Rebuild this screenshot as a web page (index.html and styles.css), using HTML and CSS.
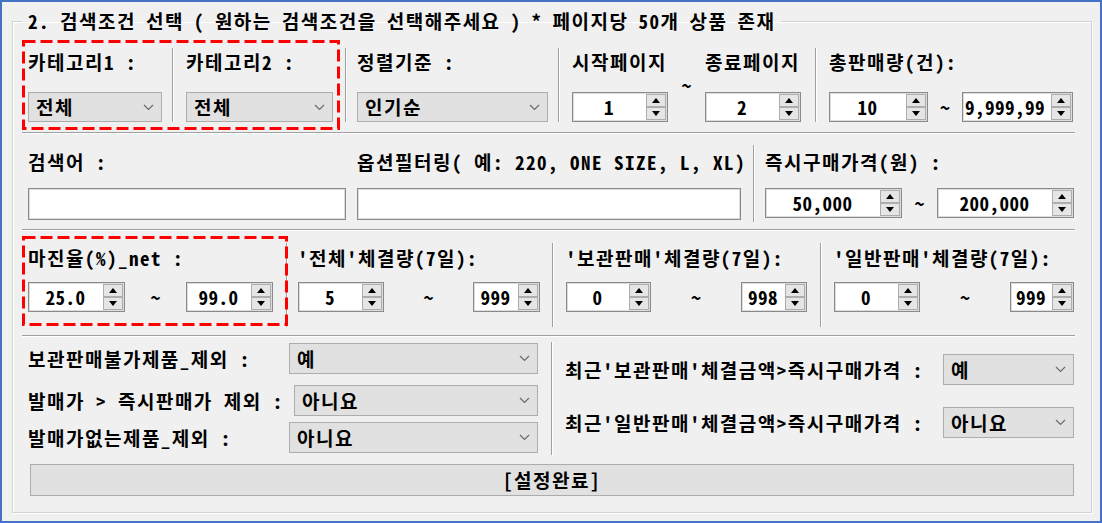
FILE: index.html
```html
<!DOCTYPE html>
<html>
<head>
    <title>검색조건 선택</title>
    <meta http-equiv="content-type" content="text/html; charset=UTF-8"/>
    <link rel="stylesheet" href="styles.css">
</head>
<body>
    <div class="window">
        <fieldset class="group">
            <legend>2. 검색조건 선택 ( 원하는 검색조건을 선택해주세요 ) * 페이지당 50개 상품 존재</legend>

            <!-- 1행 : 카테고리 / 정렬 / 페이지 / 총판매량 -->
            <div class="row r1">
                <div class="cell cat1">
                    <div class="lbl">카테고리1 :</div>
                    <div class="combo ctl"><span>전체</span><svg width="11" height="7" viewBox="0 0 11 7"><polyline points="1,1 5.5,5.5 10,1"/></svg></div>
                </div>
                <div class="cell dv cat2">
                    <div class="lbl">카테고리2 :</div>
                    <div class="combo ctl"><span>전체</span><svg width="11" height="7" viewBox="0 0 11 7"><polyline points="1,1 5.5,5.5 10,1"/></svg></div>
                </div>
                <div class="cell dv sort">
                    <div class="lbl">정렬기준 :</div>
                    <div class="combo ctl"><span>인기순</span><svg width="11" height="7" viewBox="0 0 11 7"><polyline points="1,1 5.5,5.5 10,1"/></svg></div>
                </div>
                <div class="cell dv pages">
                    <div class="sub">
                        <div class="lbl">시작페이지</div>
                        <div class="spin ctl w96"><span class="val">1</span><span class="arrows"><i class="up"></i><i class="dn"></i></span></div>
                    </div>
                    <div class="tl tl_up">~</div>
                    <div class="sub">
                        <div class="lbl">종료페이지</div>
                        <div class="spin ctl w96"><span class="val">2</span><span class="arrows"><i class="up"></i><i class="dn"></i></span></div>
                    </div>
                </div>
                <div class="cell dv total">
                    <div class="lbl">총판매량(건):</div>
                    <div class="range ctl">
                        <div class="spin w99"><span class="val">10</span><span class="arrows"><i class="up"></i><i class="dn"></i></span></div>
                        <span class="tl">~</span>
                        <div class="spin w111"><span class="val left">9,999,99</span><span class="arrows"><i class="up"></i><i class="dn"></i></span></div>
                    </div>
                </div>
            </div>

            <!-- 2행 : 검색어 / 옵션필터링 / 즉시구매가격 -->
            <div class="row r2">
                <div class="cell kw">
                    <div class="lbl">검색어 :</div>
                    <div class="tb ctl"></div>
                </div>
                <div class="cell opt">
                    <div class="lbl">옵션필터링( 예: 220, ONE SIZE, L, XL)</div>
                    <div class="tb ctl"></div>
                </div>
                <div class="cell dv price">
                    <div class="lbl">즉시구매가격(원) :</div>
                    <div class="range ctl">
                        <div class="spin w137"><span class="val">50,000</span><span class="arrows"><i class="up"></i><i class="dn"></i></span></div>
                        <span class="tl">~</span>
                        <div class="spin w137"><span class="val">200,000</span><span class="arrows"><i class="up"></i><i class="dn"></i></span></div>
                    </div>
                </div>
            </div>

            <!-- 3행 : 마진율 / 체결량 -->
            <div class="row r3">
                <div class="cell margin">
                    <div class="lbl">마진율(%)_net :</div>
                    <div class="range ctl">
                        <div class="spin w97"><span class="val">25.0</span><span class="arrows"><i class="up"></i><i class="dn"></i></span></div>
                        <span class="tl">~</span>
                        <div class="spin w87"><span class="val">99.0</span><span class="arrows"><i class="up"></i><i class="dn"></i></span></div>
                    </div>
                </div>
                <div class="cell dv all">
                    <div class="lbl">'전체'체결량(7일):</div>
                    <div class="range ctl">
                        <div class="spin w86"><span class="val">5</span><span class="arrows"><i class="up"></i><i class="dn"></i></span></div>
                        <span class="tl">~</span>
                        <div class="spin w67"><span class="val">999</span><span class="arrows"><i class="up"></i><i class="dn"></i></span></div>
                    </div>
                </div>
                <div class="cell dv keep">
                    <div class="lbl">'보관판매'체결량(7일):</div>
                    <div class="range ctl">
                        <div class="spin w85"><span class="val">0</span><span class="arrows"><i class="up"></i><i class="dn"></i></span></div>
                        <span class="tl">~</span>
                        <div class="spin w66"><span class="val">998</span><span class="arrows"><i class="up"></i><i class="dn"></i></span></div>
                    </div>
                </div>
                <div class="cell dv gen">
                    <div class="lbl">'일반판매'체결량(7일):</div>
                    <div class="range ctl">
                        <div class="spin w86"><span class="val">0</span><span class="arrows"><i class="up"></i><i class="dn"></i></span></div>
                        <span class="tl">~</span>
                        <div class="spin w64"><span class="val">999</span><span class="arrows"><i class="up"></i><i class="dn"></i></span></div>
                    </div>
                </div>
            </div>

            <!-- 4행 : 제외 조건 -->
            <div class="row r4">
                <div class="opts">
                    <div class="line l1">
                        <span class="lbl">보관판매불가제품_제외 :</span>
                        <div class="combo"><span>예</span><svg width="11" height="7" viewBox="0 0 11 7"><polyline points="1,1 5.5,5.5 10,1"/></svg></div>
                    </div>
                    <div class="line l2">
                        <span class="lbl">발매가 &gt; 즉시판매가 제외 :</span>
                        <div class="combo"><span>아니요</span><svg width="11" height="7" viewBox="0 0 11 7"><polyline points="1,1 5.5,5.5 10,1"/></svg></div>
                    </div>
                    <div class="line l3">
                        <span class="lbl">발매가없는제품_제외 :</span>
                        <div class="combo"><span>아니요</span><svg width="11" height="7" viewBox="0 0 11 7"><polyline points="1,1 5.5,5.5 10,1"/></svg></div>
                    </div>
                </div>
                <div class="recent dv">
                    <div class="line">
                        <span class="lbl">최근'보관판매'체결금액&gt;즉시구매가격 :</span>
                        <div class="combo"><span>예</span><svg width="11" height="7" viewBox="0 0 11 7"><polyline points="1,1 5.5,5.5 10,1"/></svg></div>
                    </div>
                    <div class="line l5">
                        <span class="lbl">최근'일반판매'체결금액&gt;즉시구매가격 :</span>
                        <div class="combo"><span>아니요</span><svg width="11" height="7" viewBox="0 0 11 7"><polyline points="1,1 5.5,5.5 10,1"/></svg></div>
                    </div>
                </div>
            </div>

            <div class="apply">[설정완료]</div>
        </fieldset>

        <!-- 강조 표시 -->
        <svg class="mark m1" width="318" height="90"><rect x="1.5" y="1.5" width="315" height="87"/></svg>
        <svg class="mark m2" width="266" height="90"><rect x="1.5" y="1.5" width="263" height="87"/></svg>
    </div>
</body>
</html>
```

FILE: styles.css
```css
*{
    box-sizing: border-box;
}
body{
    margin: 0;
    font: bold 19px/22px "Noto Sans Mono CJK KR", "Noto Sans CJK KR", "Noto Sans", sans-serif;
    letter-spacing: 1.5px;
    color: #000;
}
.window{
    position: relative;
    width: 1102px;
    height: 523px;
    border: 2px solid #4472c4;
    background-color: #f0f0f0;
    padding: 8px 0 0 10px;
}
.group{
    margin: 0;
    width: 1080px;
    height: 503px;
    min-width: 0;
    border: 1px solid #d3d3d3;
    box-shadow: inset 1px 1px 0 #fff, 1px 1px 0 #fff;
    padding: 8px 16px 0 9px;
}
.group>legend{
    padding: 0 6px;
    line-height: 22px;
    word-spacing: -1px;
}

/* 행 */
.row{
    display: flex;
    border-bottom: 1px solid #a0a0a0;
    box-shadow: 0 1px 0 #fff;
}
.cell{
    flex: none;
    display: flex;
    flex-direction: column;
}
.dv{
    border-left: 1px solid #a0a0a0;
    box-shadow: inset 1px 0 0 #fff;
}
.lbl{
    height: 22px;
    line-height: 22px;
    white-space: nowrap;
}

.r1{padding: 8px 0 10px;}
.r1 .cell{height: 74px; padding-top: 3px;}
.r1 .ctl{margin-top: 19px;}
.r1 .cat1{margin-left: 6px; width: 134px;}
.r1 .cat2{margin-left: 10px; width: 161px; padding-left: 13px;}
.r1 .sort{margin-left: 12px; width: 203px; padding-left: 11px;}
.r1 .pages{margin-left: 10px; width: 243px; padding-left: 13px; flex-direction: row;}
.r1 .total{margin-left: 14px; width: 258px; padding-left: 13px;}
.pages .sub{
    display: flex;
    flex-direction: column;
}
.pages .tl_up{
    width: 37px;
    margin-top: 23px;
    text-align: center;
    letter-spacing: 0;
}

.r2{padding: 12px 0 7px;}
.r2 .cell{height: 77px; padding-top: 6px;}
.r2 .ctl{margin-top: 15px;}
.r2 .kw{margin-left: 6px; width: 318px;}
.r2 .opt{margin-left: 11px; width: 384px;}
.r2 .price{margin-left: 12px; width: 321px; padding-left: 11px;}

.r3{padding: 13px 0 8px;}
.r3 .cell{height: 84px; padding-top: 4px;}
.r3 .ctl{margin-top: 13px;}
.r3 .margin{margin-left: 6px; width: 245px;}
.r3 .all{margin-left: 13px; width: 254px; padding-left: 11px;}
.r3 .keep{margin-left: 12px; width: 255px; padding-left: 13px;}
.r3 .gen{margin-left: 13px; width: 254px; padding-left: 13px;}

.r4{
    padding-top: 6px;
    border-bottom: none;
    box-shadow: none;
}
.opts{
    margin-left: 6px;
    width: 510px;
    height: 113px;
    padding-top: 1px;
}
.line{
    display: flex;
    align-items: center;
}
.line .lbl{flex: none; width: 261px;}
.line.l2 .lbl{width: 266px;}
.line .combo{flex: 1; height: 31px;}
.l2{margin-top: 11px;}
.l3{margin-top: 6px;}
.recent{
    margin-left: 13px;
    width: 523px;
    height: 113px;
    padding: 12px 0 0 13px;
}
.recent .lbl{width: 378px;}
.recent .l5{margin-top: 22px;}

/* 콤보박스 */
.combo{
    display: flex;
    align-items: center;
    justify-content: space-between;
    height: 30px;
    background-color: #e1e1e1;
    border: 1px solid #adadad;
    padding: 0 7px 0 7px;
}
.combo svg{
    flex: none;
}
.combo polyline{
    fill: none;
    stroke: #6a6a6a;
    stroke-width: 1.2;
}

/* 텍스트박스 */
.tb{
    height: 32px;
    background-color: #fff;
    border: 1px solid #8a8a8a;
    box-shadow: inset 0 0 0 1px #dcdcdc;
}

/* 숫자 입력 */
.range{
    display: flex;
    align-items: center;
}
.range .tl{
    flex: 1;
    text-align: center;
    letter-spacing: 0;
}
.spin{
    flex: none;
    display: flex;
    height: 30px;
    background-color: #fff;
    border: 1px solid #8a8a8a;
    box-shadow: inset 0 0 0 1px #dcdcdc;
}
.spin .val{
    flex: 1;
    min-width: 0;
    white-space: nowrap;
    text-align: center;
    line-height: 28px;
    letter-spacing: 0.5px;
}
.spin .val.left{
    text-align: left;
    padding-left: 2px;
}
.spin .arrows{
    flex: none;
    display: flex;
    flex-direction: column;
    width: 20px;
    margin: 1px;
}
.spin .arrows i{
    flex: 1;
    display: flex;
    align-items: center;
    justify-content: center;
    background-color: #e5e5e5;
    border: 1px solid #adadad;
}
.spin .arrows i::after{
    content: "";
    border-left: 4px solid transparent;
    border-right: 4px solid transparent;
}
.spin .arrows .up::after{border-bottom: 5px solid #000;}
.spin .arrows .dn::after{border-top: 5px solid #000;}
.w96{width: 96px;}
.w99{width: 99px;}
.w111{width: 111px;}
.w137{width: 137px;}
.w97{width: 97px;}
.w87{width: 87px;}
.w86{width: 86px;}
.w85{width: 85px;}
.w67{width: 67px;}
.w66{width: 66px;}
.w64{width: 64px;}

/* 설정완료 버튼 */
.apply{
    margin: 9px 0 0 8px;
    width: 1044px;
    height: 32px;
    line-height: 30px;
    text-align: center;
    background-color: #e1e1e1;
    border: 1px solid #adadad;
}

/* 빨간 점선 강조 */
.mark{
    position: absolute;
    left: 20px;
}
.mark rect{
    fill: none;
    stroke: #ff0000;
    stroke-width: 3;
    stroke-dasharray: 12 5;
}
.m1{top: 38px;}
.m2{top: 234px;}
```
